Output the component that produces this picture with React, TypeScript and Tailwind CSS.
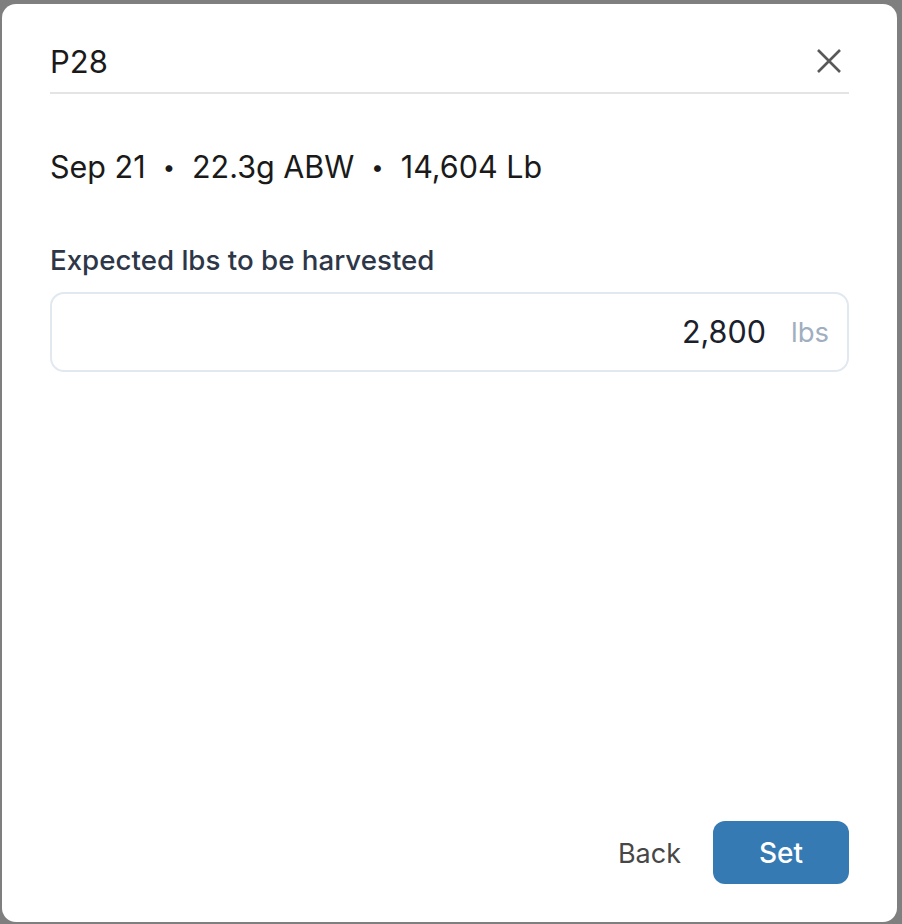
export default function App() {
  return (
    <div className="h-[924px] w-[902px] bg-[#7f7f7f] pt-[4px] pl-[2px] pr-[5px] pb-[2px] flex font-['Inter',sans-serif]">
      <div className="flex-1 bg-white rounded-[14px] flex flex-col px-[48px]">
        {/* Header */}
        <div className="flex items-center justify-between h-[90px] pt-[26px] border-b-2 border-[#e4e4e4]">
          <span className="text-[31px] leading-none text-[#1a1a1a]">P28</span>
          <button className="text-[#595959] mr-[8px]" title="Close">
            <svg width="24" height="24" viewBox="0 0 24 24" fill="none" stroke="currentColor" strokeWidth="2.6" strokeLinecap="butt">
              <path d="M1 1L23 23M23 1L1 23" />
            </svg>
          </button>
        </div>

        <div className="mt-[58px] flex items-center text-[30.5px] text-[#1a1a1a] leading-none">
          <span>Sep 21</span>
          <span className="mx-[17px] text-[22px]">•</span>
          <span>22.3g ABW</span>
          <span className="mx-[17px] text-[22px]">•</span>
          <span>14,604 Lb</span>
        </div>

        <label className="mt-[64px] text-[27.7px] text-[#2d3748] font-medium leading-none">
          Expected lbs to be harvested
        </label>
        <div className="mt-[18px] h-[80px] rounded-[14px] border-2 border-[#e2e8f0] flex items-center justify-end pr-[18px] gap-[25px]">
          <span className="text-[30.5px] text-[#1a202c]">2,800</span>
          <span className="text-[27.5px] text-[#a0aec0]">lbs</span>
        </div>

        <div className="flex-1" />

        <div className="flex items-center justify-end gap-[32px] pb-[38px]">
          <button className="text-[27px] text-[#474747] mt-[3px]">Back</button>
          <button className="h-[63px] w-[136px] rounded-[12px] bg-[#357ab3] text-white text-[28px] font-medium">
            Set
          </button>
        </div>
      </div>
    </div>
  );
}
